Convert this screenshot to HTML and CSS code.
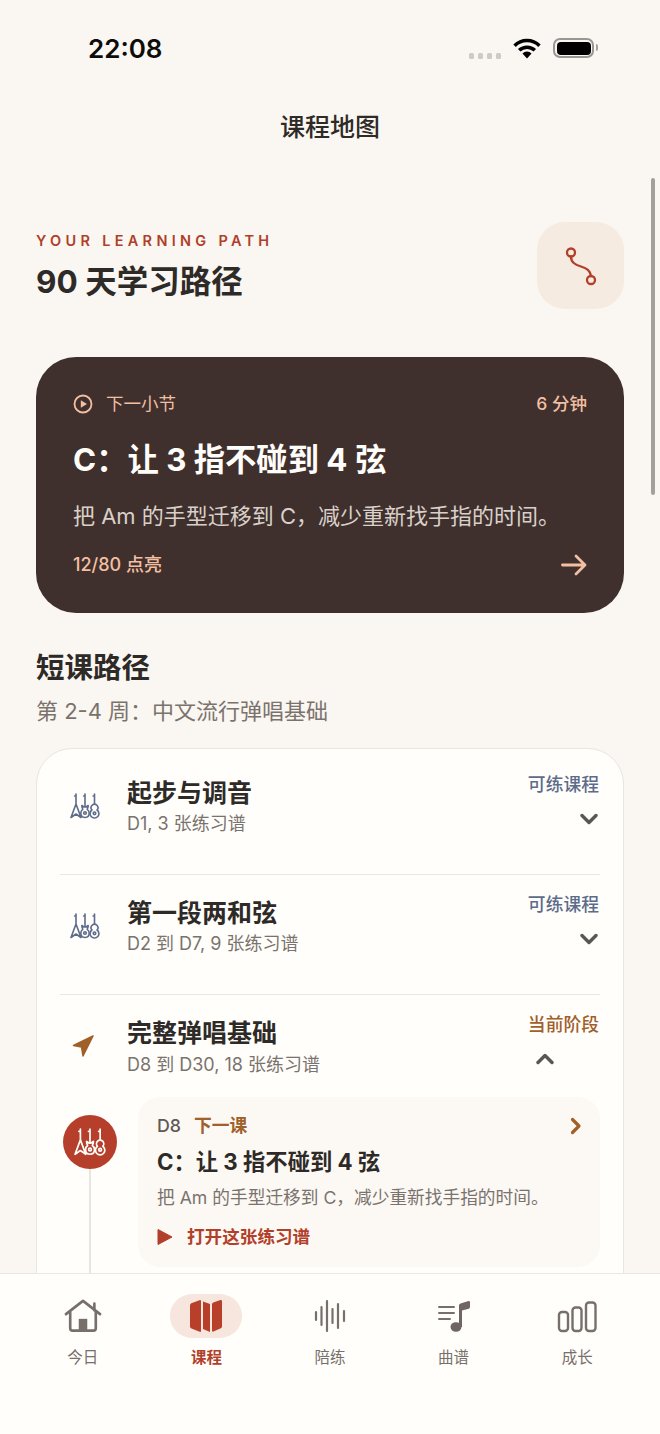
FILE: index.html
```html
<!DOCTYPE html>
<html lang="zh-CN">
<head>
    <meta charset="UTF-8">
    <meta name="viewport" content="width=device-width, initial-scale=1.0">
    <title>课程地图</title>
    <link rel="stylesheet" href="styles.css">
</head>
<body>
    <!-- shared guitar trio glyph -->
    <svg class="sprite" aria-hidden="true">
        <symbol id="guitars" viewBox="0 0 30 26">
            <g fill="none" stroke="currentColor" stroke-width="1.6" stroke-linecap="round" stroke-linejoin="round">
                <path d="M6 1v10M4.600 3H6M6 11L1 24.500L6 21L11 24.500z"/>
                <path d="M15 1v12M13.600 3H15M11.800 12.500c0 2 .7 3 1 3.800c-1.500 1-2 2.500-2 3.800c0 2.800 1.800 4.400 4.200 4.400s4.200-1.600 4.200-4.400c0-1.300-.5-2.800-2-3.800c.3-.8 1-1.800 1-3.800l-2.200 1.500h-2z"/>
                <circle cx="15" cy="20" r="1.300"/>
                <path d="M24.500 1v10M23.100 3h1.400M22 17a3.400 3.400 0 1 1 5 0a4.400 4.400 0 1 1-5 0z"/>
                <circle cx="24.500" cy="20.300" r="1.300"/>
            </g>
        </symbol>
    </svg>

    <div class="phone">
        <div class="status-bar">
            <span class="clock">22:08</span>
            <div class="status-icons">
                <div class="signal"><i></i><i></i><i></i><i></i></div>
                <svg class="wifi" width="28" height="21" viewBox="0 0 29 21">
                    <g fill="none" stroke="#000" stroke-width="3.600">
                        <path d="M1.600 7.600a18.400 18.400 0 0 1 25.800 0"/>
                        <path d="M6.400 12.400a11.600 11.600 0 0 1 16.200 0"/>
                    </g>
                    <path d="M9.800 15.600a6.800 6.800 0 0 1 9.400 0l-4.700 5.200z" fill="#000"/>
                </svg>
                <div class="battery"><div class="battery-fill"></div></div>
            </div>
        </div>

        <div class="nav-title">课程地图</div>

        <main class="content">
            <section class="path-head">
                <div>
                    <div class="eyebrow">YOUR LEARNING PATH</div>
                    <h1>90 天学习路径</h1>
                </div>
                <div class="path-tile">
                    <svg width="36" height="40" viewBox="0 0 36 40" fill="none" stroke="#b23f2a" stroke-width="2.300">
                        <circle cx="8" cy="6.500" r="4"/>
                        <circle cx="28" cy="34" r="4"/>
                        <path d="M8 10.500c0 6 4 8 10 10c6 2 9 4 10 9.500" stroke-linecap="round"/>
                    </svg>
                </div>
            </section>

            <section class="next-card">
                <div class="next-top">
                    <div class="next-label">
                        <svg width="20" height="20" viewBox="0 0 20 20">
                            <circle cx="10" cy="10" r="8.500" fill="none" stroke="#f3bfa2" stroke-width="1.800"/>
                            <path d="M7.800 6.200L14 10L7.800 13.800z" fill="#f3bfa2"/>
                        </svg>
                        <span>下一小节</span>
                    </div>
                    <span class="next-time">6 分钟</span>
                </div>
                <h2>C：让 3 指不碰到 4 弦</h2>
                <p>把 Am 的手型迁移到 C，减少重新找手指的时间。</p>
                <div class="next-bottom">
                    <span>12/80 点亮</span>
                    <svg width="26" height="22" viewBox="0 0 26 22" fill="none" stroke="#f3bfa2" stroke-width="2.800" stroke-linecap="round" stroke-linejoin="round">
                        <path d="M1.500 11H24M15 2l9 9l-9 9"/>
                    </svg>
                </div>
            </section>

            <h3 class="section-title">短课路径</h3>
            <div class="section-sub">第 2-4 周：中文流行弹唱基础</div>

            <section class="course-card">
                <div class="course-row">
                    <div class="course-icon"><svg width="30" height="26"><use href="#guitars"/></svg></div>
                    <div class="course-text">
                        <div class="course-name">起步与调音</div>
                        <div class="course-meta">D1, 3 张练习谱</div>
                    </div>
                    <div class="course-side">
                        <span class="tag">可练课程</span>
                        <svg class="chevron" width="18" height="12" viewBox="0 0 18 12"><path d="M2 2.500l7 7l7-7"/></svg>
                    </div>
                </div>

                <div class="course-row">
                    <div class="course-icon"><svg width="30" height="26"><use href="#guitars"/></svg></div>
                    <div class="course-text">
                        <div class="course-name">第一段两和弦</div>
                        <div class="course-meta">D2 到 D7, 9 张练习谱</div>
                    </div>
                    <div class="course-side">
                        <span class="tag">可练课程</span>
                        <svg class="chevron" width="18" height="12" viewBox="0 0 18 12"><path d="M2 2.500l7 7l7-7"/></svg>
                    </div>
                </div>

                <div class="course-row open">
                    <div class="course-icon">
                        <svg width="22" height="22" viewBox="0 0 22 22"><path d="M21 1L1.500 10.500L9.500 12L11 21z" fill="#a0602a" stroke="#a0602a" stroke-width="1.500" stroke-linejoin="round"/></svg>
                    </div>
                    <div class="course-text">
                        <div class="course-name">完整弹唱基础</div>
                        <div class="course-meta">D8 到 D30, 18 张练习谱</div>
                    </div>
                    <div class="course-side">
                        <span class="tag current">当前阶段</span>
                        <svg class="chevron up" width="18" height="12" viewBox="0 0 18 12"><path d="M2 9.500l7-7l7 7"/></svg>
                    </div>
                </div>

                <div class="lesson-row">
                    <div class="timeline">
                        <div class="timeline-dot"><svg width="32" height="28"><use href="#guitars"/></svg></div>
                        <div class="timeline-rail"></div>
                    </div>
                    <div class="lesson">
                        <div class="lesson-head">
                            <span class="lesson-day">D8</span>
                            <span class="lesson-flag">下一课</span>
                            <svg class="lesson-go" width="12" height="18" viewBox="0 0 12 18" fill="none" stroke="#a0602a" stroke-width="3.200" stroke-linecap="round" stroke-linejoin="round"><path d="M2.500 2.500L9 9l-6.500 6.500"/></svg>
                        </div>
                        <div class="lesson-name">C：让 3 指不碰到 4 弦</div>
                        <div class="lesson-desc">把 Am 的手型迁移到 C，减少重新找手指的时间。</div>
                        <div class="lesson-action">
                            <svg width="16" height="18" viewBox="0 0 16 18"><path d="M1 1.500L15 9L1 16.500z" fill="#b23f2a" stroke="#b23f2a" stroke-linejoin="round"/></svg>
                            <span>打开这张练习谱</span>
                        </div>
                    </div>
                </div>
            </section>
        </main>

        <nav class="tab-bar">
            <div class="tab">
                <div class="tab-icon">
                    <svg width="38" height="36" viewBox="0 0 40 38" fill="none" stroke="#77706a" stroke-width="2.800" stroke-linecap="round" stroke-linejoin="round">
                        <path d="M2 17L20 3L38 17"/>
                        <path d="M32 6v7"/>
                        <path d="M6.500 15v17a2.500 2.500 0 0 0 2.500 2.500h22a2.500 2.500 0 0 0 2.500-2.500V15"/>
                        <rect x="15.500" y="22" width="9" height="12" fill="#77706a" stroke="none"/>
                    </svg>
                </div>
                <span>今日</span>
            </div>
            <div class="tab active">
                <div class="tab-icon">
                    <svg width="34" height="34" viewBox="0 0 34 34" fill="#b83f2a">
                        <path d="M1 6.500Q1 5 2.300 4.300L10.500 1.200Q12 .8 12 2.300V32Q12 33.300 10.700 32.800L2.500 29.500Q1 29 1 27.500z"/>
                        <path d="M14 2.500L21 5V33L14 30z"/>
                        <path d="M23 5.300Q23 4 24.300 3.500L31.500 1Q33 .7 33 2.200V27.500Q33 28.800 31.800 29.300L24.500 32.500Q23 33 23 31.500z"/>
                    </svg>
                </div>
                <span>课程</span>
            </div>
            <div class="tab">
                <div class="tab-icon">
                    <svg width="32" height="34" viewBox="0 0 32 34" fill="none" stroke="#77706a" stroke-width="2.200" stroke-linecap="round">
                        <path d="M2 13v8M7.500 8v18M13 2v30M18.500 10v14M24 5v24M30 12v10"/>
                    </svg>
                </div>
                <span>陪练</span>
            </div>
            <div class="tab">
                <div class="tab-icon">
                    <svg width="34" height="34" viewBox="0 0 34 34">
                        <path d="M2 8h15M2 14h15M2 20h11" fill="none" stroke="#77706a" stroke-width="2" stroke-linecap="round"/>
                        <ellipse cx="19" cy="28" rx="5.500" ry="4.800" fill="#6f6663"/>
                        <path d="M22 28V6.500Q22 5 23.500 4.500L31.500 2Q33 1.800 33 3.300V8Q33 9.300 31.800 9.700L25 11.500V28z" fill="#6f6663"/>
                    </svg>
                </div>
                <span>曲谱</span>
            </div>
            <div class="tab">
                <div class="tab-icon">
                    <svg width="40" height="34" viewBox="0 0 40 34" fill="none" stroke="#77706a" stroke-width="2.400">
                        <rect x="2" y="13" width="9" height="19" rx="3"/>
                        <rect x="15.500" y="8.500" width="9" height="23.500" rx="3"/>
                        <rect x="29" y="3.500" width="9.500" height="28.500" rx="3"/>
                    </svg>
                </div>
                <span>成长</span>
            </div>
        </nav>

        <div class="scroll-thumb"></div>
    </div>
</body>
</html>
```

FILE: styles.css
```css
* {
    box-sizing: border-box;
}
html, body {
    margin: 0;
    padding: 0;
}
body {
    font-family: Inter, "Noto Sans CJK SC", sans-serif;
    background-color: #faf6f1;
    color: #2e2a27;
}
h1, h2, h3, p {
    margin: 0;
}
svg {
    display: block;
}
.sprite {
    position: absolute;
    width: 0;
    height: 0;
}
.phone {
    position: relative;
    width: 660px;
    height: 1434px;
    display: flex;
    flex-direction: column;
    overflow: hidden;
}

/* status bar */
.status-bar {
    height: 88px;
    padding: 30px 66px 0 88px;
    display: flex;
    justify-content: space-between;
    align-items: flex-start;
    flex: none;
}
.clock {
    font-size: 26px;
    font-weight: 600;
    line-height: 37px;
    color: #0c0c0c;
}
.status-icons {
    display: flex;
    align-items: center;
    height: 36px;
}
.signal {
    display: flex;
    gap: 4px;
    margin: 15px 12px 0 0;
}
.signal i {
    width: 5px;
    height: 6px;
    border-radius: 1.5px;
    background-color: #cdcbc8;
}
.battery {
    width: 41px;
    height: 20px;
    margin-left: 12px;
    padding: 1.500px;
    border: 2px solid #999794;
    border-radius: 7px;
    position: relative;
}
.battery::after {
    content: "";
    position: absolute;
    right: -6px;
    top: 4px;
    width: 2.500px;
    height: 7px;
    background-color: #a3a19e;
    border-radius: 0 2px 2px 0;
}
.battery-fill {
    height: 100%;
    background-color: #000;
    border-radius: 4px;
}

.nav-title {
    margin-top: 21px;
    height: 36px;
    line-height: 36px;
    text-align: center;
    font-size: 25px;
    font-weight: 500;
    flex: none;
}

.content {
    flex: 1;
    min-height: 0;
    overflow: hidden;
    padding: 77px 36px 0;
}

/* heading */
.path-head {
    display: flex;
    justify-content: space-between;
    align-items: center;
}
.eyebrow {
    font-size: 14.500px;
    line-height: 20px;
    font-weight: 600;
    letter-spacing: 4.300px;
    color: #b03f2a;
    margin: 2px 0 10px;
}
h1 {
    font-size: 31.500px;
    line-height: 42px;
    font-weight: 700;
}
.path-tile {
    width: 87px;
    height: 87px;
    border-radius: 28px;
    background-color: #f6ebe1;
    display: flex;
    align-items: center;
    justify-content: center;
}

/* next lesson card */
.next-card {
    margin-top: 48px;
    height: 256px;
    padding: 35px 37px 0;
    border-radius: 40px;
    background-color: #3f302d;
    color: #f3bfa2;
}
.next-top {
    display: flex;
    justify-content: space-between;
    font-size: 17.500px;
    line-height: 24px;
}
.next-label {
    display: flex;
    align-items: center;
    gap: 13px;
}
.next-time {
    font-weight: 500;
}
.next-card h2 {
    margin-top: 22px;
    font-size: 31.300px;
    line-height: 44px;
    font-weight: 700;
    color: #fffdf9;
}
.next-card p {
    margin-top: 19px;
    font-size: 22px;
    line-height: 30px;
    color: #d9d0ca;
}
.next-bottom {
    margin-top: 20px;
    display: flex;
    justify-content: space-between;
    align-items: center;
    font-size: 18px;
    line-height: 28px;
    font-weight: 500;
}

.section-title {
    margin-top: 35px;
    font-size: 28.500px;
    line-height: 40px;
    font-weight: 700;
}
.section-sub {
    margin-top: 8px;
    font-size: 22px;
    line-height: 30px;
    color: #7a736d;
}

/* course list */
.course-card {
    margin-top: 22px;
    padding: 6px 23px 0;
    background-color: #fffefb;
    border: 1.500px solid #e9e5df;
    border-radius: 36px;
}
.course-row {
    display: flex;
    padding: 21px 0 38px;
    border-bottom: 1px solid #ebe8e3;
}
.course-row.open {
    padding-bottom: 20px;
    border-bottom: none;
}
.course-icon {
    width: 67px;
    padding: 17px 0 0 10px;
    flex: none;
}
.course-icon svg {
    color: #5d6c8a;
}
.course-row.open .course-icon {
    padding: 19px 0 0 12px;
}
.course-text {
    flex: 1;
}
.course-name {
    font-size: 25px;
    line-height: 34px;
    font-weight: 700;
}
.course-meta {
    margin-top: 2px;
    font-size: 18px;
    line-height: 24px;
    color: #7a736d;
}
.course-row.open .course-meta {
    margin-top: 3px;
}
.course-side {
    display: flex;
    flex-direction: column;
    align-items: flex-end;
    margin-top: -1px;
}
.tag {
    margin-right: 1px;
    font-size: 17.800px;
    line-height: 20px;
    font-weight: 500;
    color: #5d6c8a;
}
.tag.current {
    color: #a0602a;
}
.chevron {
    margin: 18px 2px 0 0;
    fill: none;
    stroke: #5a5652;
    stroke-width: 3.400;
    stroke-linecap: round;
    stroke-linejoin: round;
}
.chevron.up {
    margin-right: 46px;
}

/* expanded lesson */
.lesson-row {
    display: flex;
    padding-left: 3px;
}
.timeline {
    width: 75px;
    flex: none;
    display: flex;
    flex-direction: column;
    align-items: flex-start;
    padding-top: 18px;
}
.timeline-dot {
    width: 54px;
    height: 54px;
    border-radius: 50%;
    background-color: #b53f2a;
    color: #fffefb;
    display: flex;
    align-items: center;
    justify-content: center;
}
.timeline-rail {
    flex: 1;
    width: 2px;
    margin-left: 26px;
    background-color: #e8e4de;
}
.lesson {
    flex: 1;
    height: 170px;
    margin-bottom: 60px;
    padding: 17px 18px 0 19px;
    background-color: #fcf8f4;
    border-radius: 22px;
}
.lesson-head {
    display: flex;
    align-items: center;
    gap: 13px;
    font-size: 17.800px;
    line-height: 24px;
}
.lesson-day {
    font-weight: 500;
    color: #5f5a55;
}
.lesson-flag {
    font-weight: 700;
    color: #a0602a;
}
.lesson-go {
    margin-left: auto;
}
.lesson-name {
    margin-top: 7px;
    font-size: 22.300px;
    line-height: 34px;
    font-weight: 700;
}
.lesson-desc {
    margin-top: 6px;
    font-size: 17.700px;
    line-height: 26px;
    color: #7a736d;
}
.lesson-action {
    margin-top: 13px;
    display: flex;
    align-items: center;
    gap: 14px;
    font-size: 17.600px;
    line-height: 26px;
    font-weight: 700;
    color: #b23f2a;
}

/* bottom tabs */
.tab-bar {
    height: 161px;
    flex: none;
    display: grid;
    grid-template-columns: repeat(5, 1fr);
    padding: 20px 21px 0;
    background-color: #fffefb;
    border-top: 1px solid #ebe8e3;
}
.tab {
    display: flex;
    flex-direction: column;
    align-items: center;
    font-size: 15.500px;
    line-height: 20px;
    color: #77706a;
}
.tab-icon {
    width: 72px;
    height: 44px;
    margin-bottom: 10px;
    display: flex;
    align-items: center;
    justify-content: center;
    border-radius: 22px;
}
.tab.active .tab-icon {
    background-color: #f6e6dd;
}
.tab.active {
    color: #b23f2a;
    font-weight: 700;
}

.scroll-thumb {
    position: absolute;
    right: 5px;
    top: 178px;
    width: 4px;
    height: 317px;
    border-radius: 2px;
    background-color: #a3a09b;
}
```
